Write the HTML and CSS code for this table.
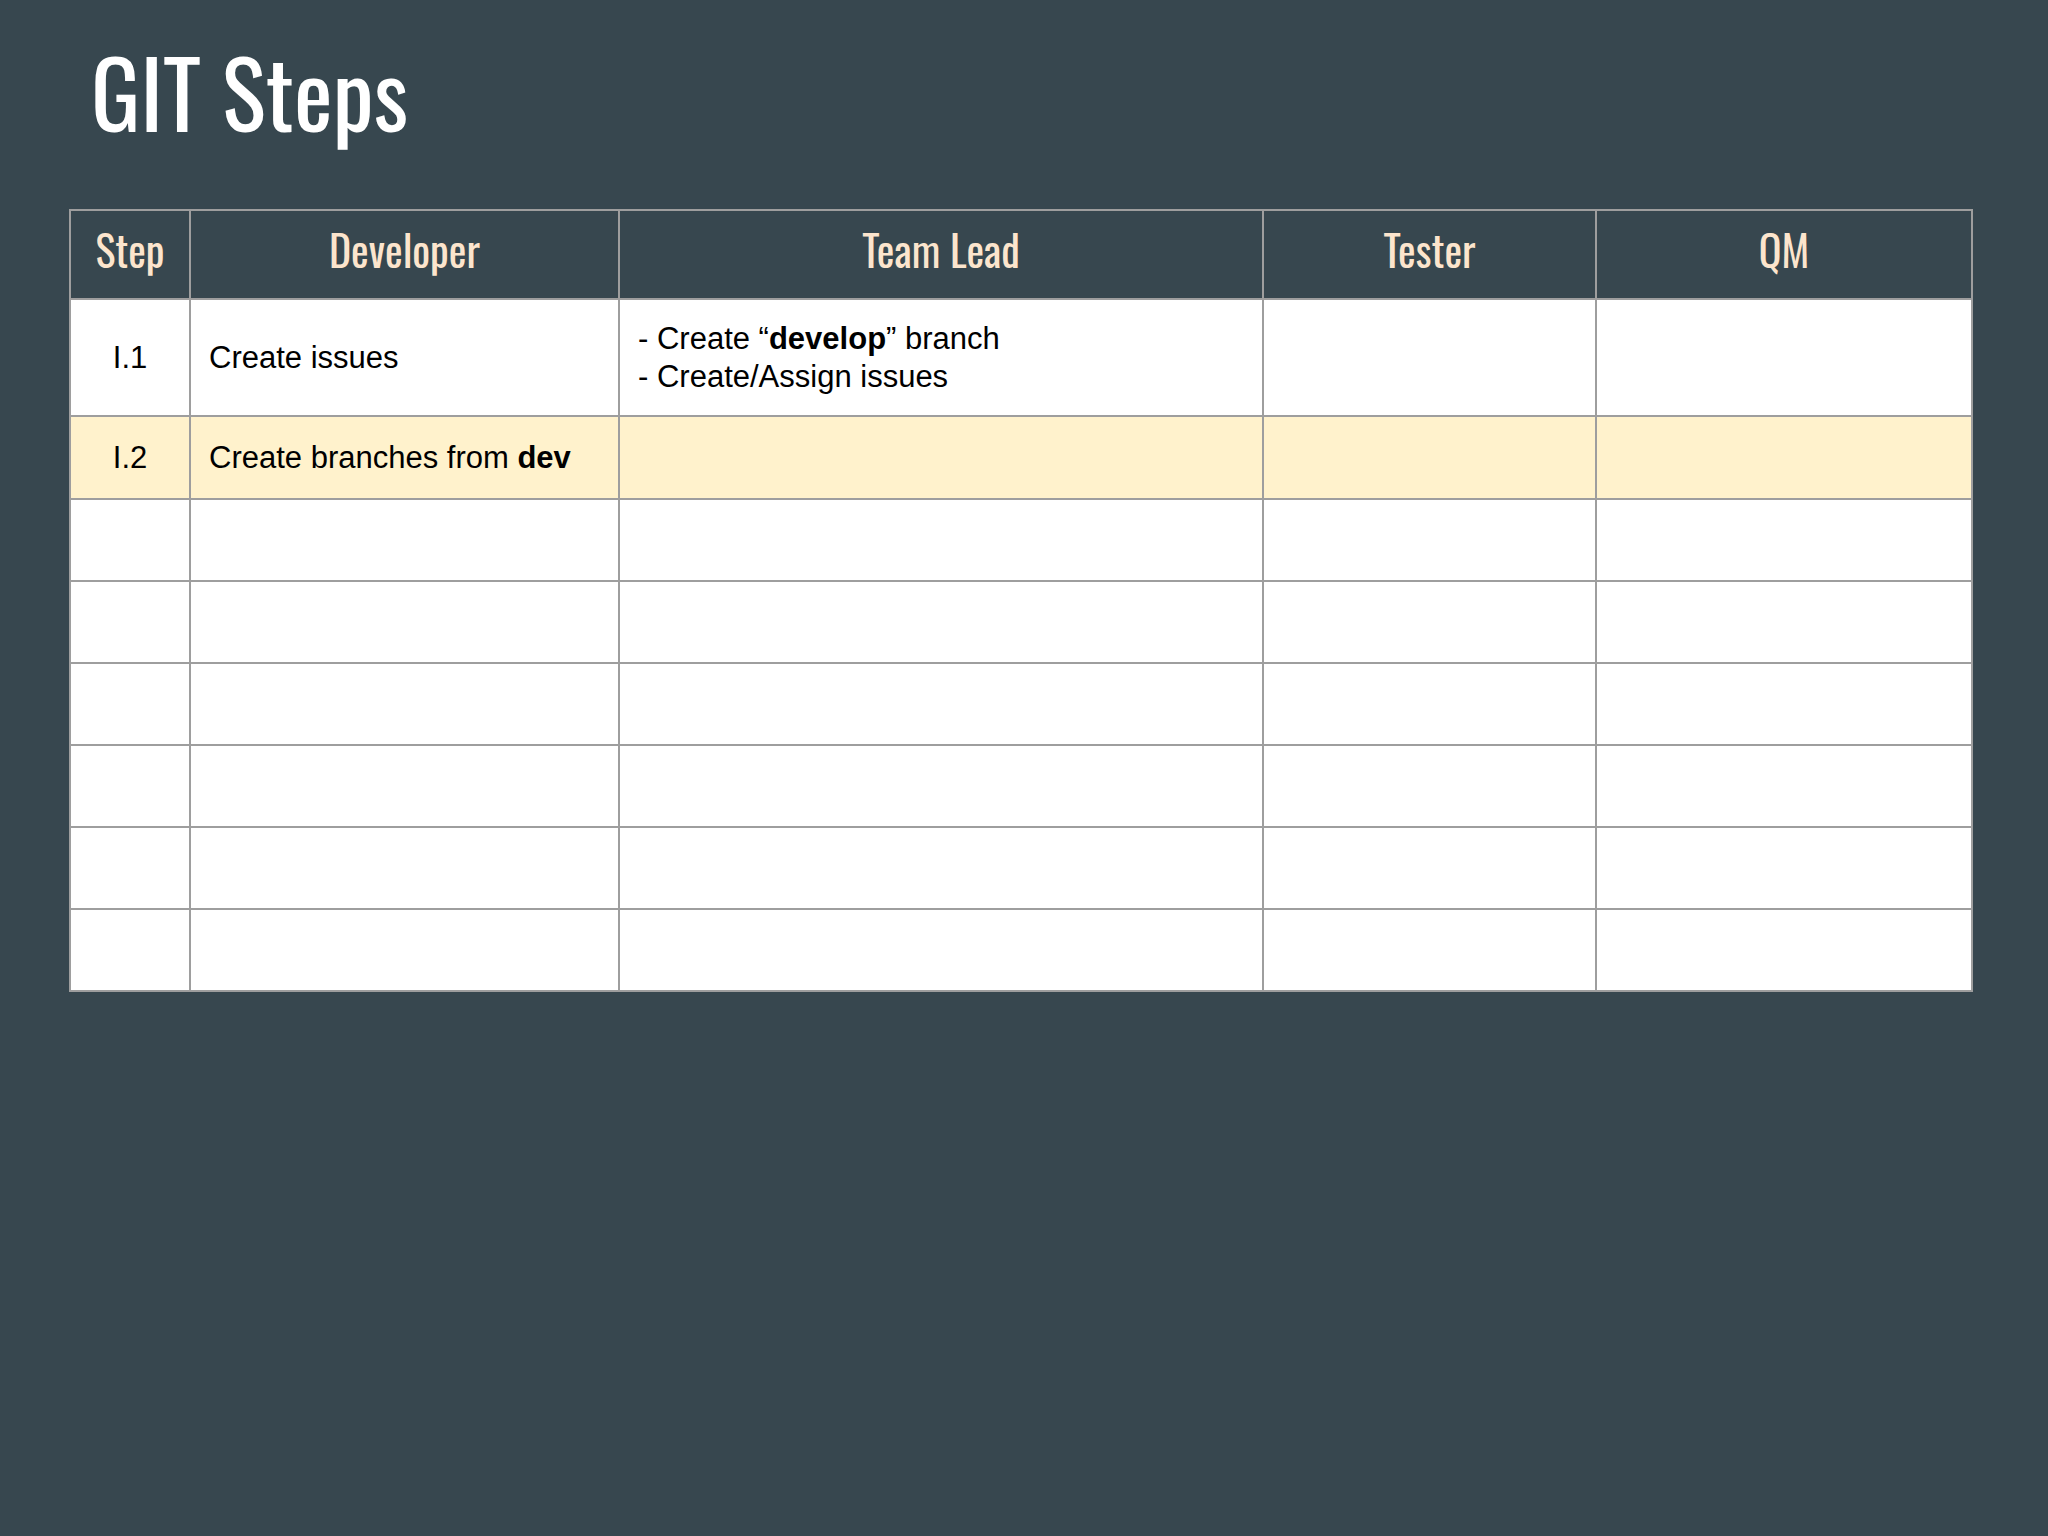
FILE: index.html
```html
<!DOCTYPE html>
<html lang="en">
<head>
<meta charset="utf-8">
<title>GIT Steps</title>
<link rel="stylesheet" href="styles.css">
</head>
<body>
<main class="slide">
  <h1 class="title">GIT Steps</h1>
  <table class="steps">
    <colgroup>
      <col class="c-step">
      <col class="c-dev">
      <col class="c-lead">
      <col class="c-tester">
      <col class="c-qm">
    </colgroup>
    <thead>
      <tr class="head">
        <th>Step</th>
        <th>Developer</th>
        <th>Team Lead</th>
        <th>Tester</th>
        <th>QM</th>
      </tr>
    </thead>
    <tbody>
      <tr class="r-tall">
        <td class="step">I.1</td>
        <td>Create issues</td>
        <td>- Create “<b>develop</b>” branch<br>- Create/Assign issues</td>
        <td></td>
        <td></td>
      </tr>
      <tr class="r-mid hl">
        <td class="step">I.2</td>
        <td>Create branches from <b>dev</b></td>
        <td></td>
        <td></td>
        <td></td>
      </tr>
      <tr class="r-empty"><td></td><td></td><td></td><td></td><td></td></tr>
      <tr class="r-empty"><td></td><td></td><td></td><td></td><td></td></tr>
      <tr class="r-empty"><td></td><td></td><td></td><td></td><td></td></tr>
      <tr class="r-empty"><td></td><td></td><td></td><td></td><td></td></tr>
      <tr class="r-empty"><td></td><td></td><td></td><td></td><td></td></tr>
      <tr class="r-empty"><td></td><td></td><td></td><td></td><td></td></tr>
    </tbody>
  </table>
</main>
</body>
</html>
```
FILE: styles.css
```css
html, body {
  margin: 0;
  padding: 0;
}

body {
  background: #37474f;
  width: 2048px;
  height: 1536px;
  overflow: hidden;
}

.slide {
  padding: 21px 0 0 69px;
}

.title {
  margin: 0 0 49px 22px;
  font-family: "Oswald", "Liberation Sans Narrow", sans-serif;
  font-weight: 400;
  font-size: 92px;
  line-height: 139px;
  color: #ffffff;
}

.steps {
  width: 1902px;
  table-layout: fixed;
  border-collapse: collapse;
  font-family: "Liberation Sans", Arial, sans-serif;
  font-size: 31px;
  line-height: 38px;
  color: #000000;
}

.c-step { width: 120px; }
.c-dev { width: 429px; }
.c-lead { width: 644px; }
.c-tester { width: 333px; }
.c-qm { width: 376px; }

.steps th,
.steps td {
  border: 2px solid #9e9e9e;
  padding: 0 18px;
  vertical-align: middle;
  text-align: left;
  background: #ffffff;
}

.steps th {
  background: #37474f;
  color: #fce5cd;
  font-family: "Oswald", "Liberation Sans Narrow", sans-serif;
  font-weight: 400;
  font-size: 42px;
  line-height: 50px;
  text-align: center;
  padding-bottom: 12px;
}

.steps b {
  font-weight: 700;
}

.steps td.step {
  text-align: center;
  padding: 0;
}

.head { height: 89px; }
.r-tall { height: 117px; }
.r-mid { height: 83px; }
.r-empty { height: 82px; }

.steps tr.hl td {
  background: #fff2cc;
}
```
